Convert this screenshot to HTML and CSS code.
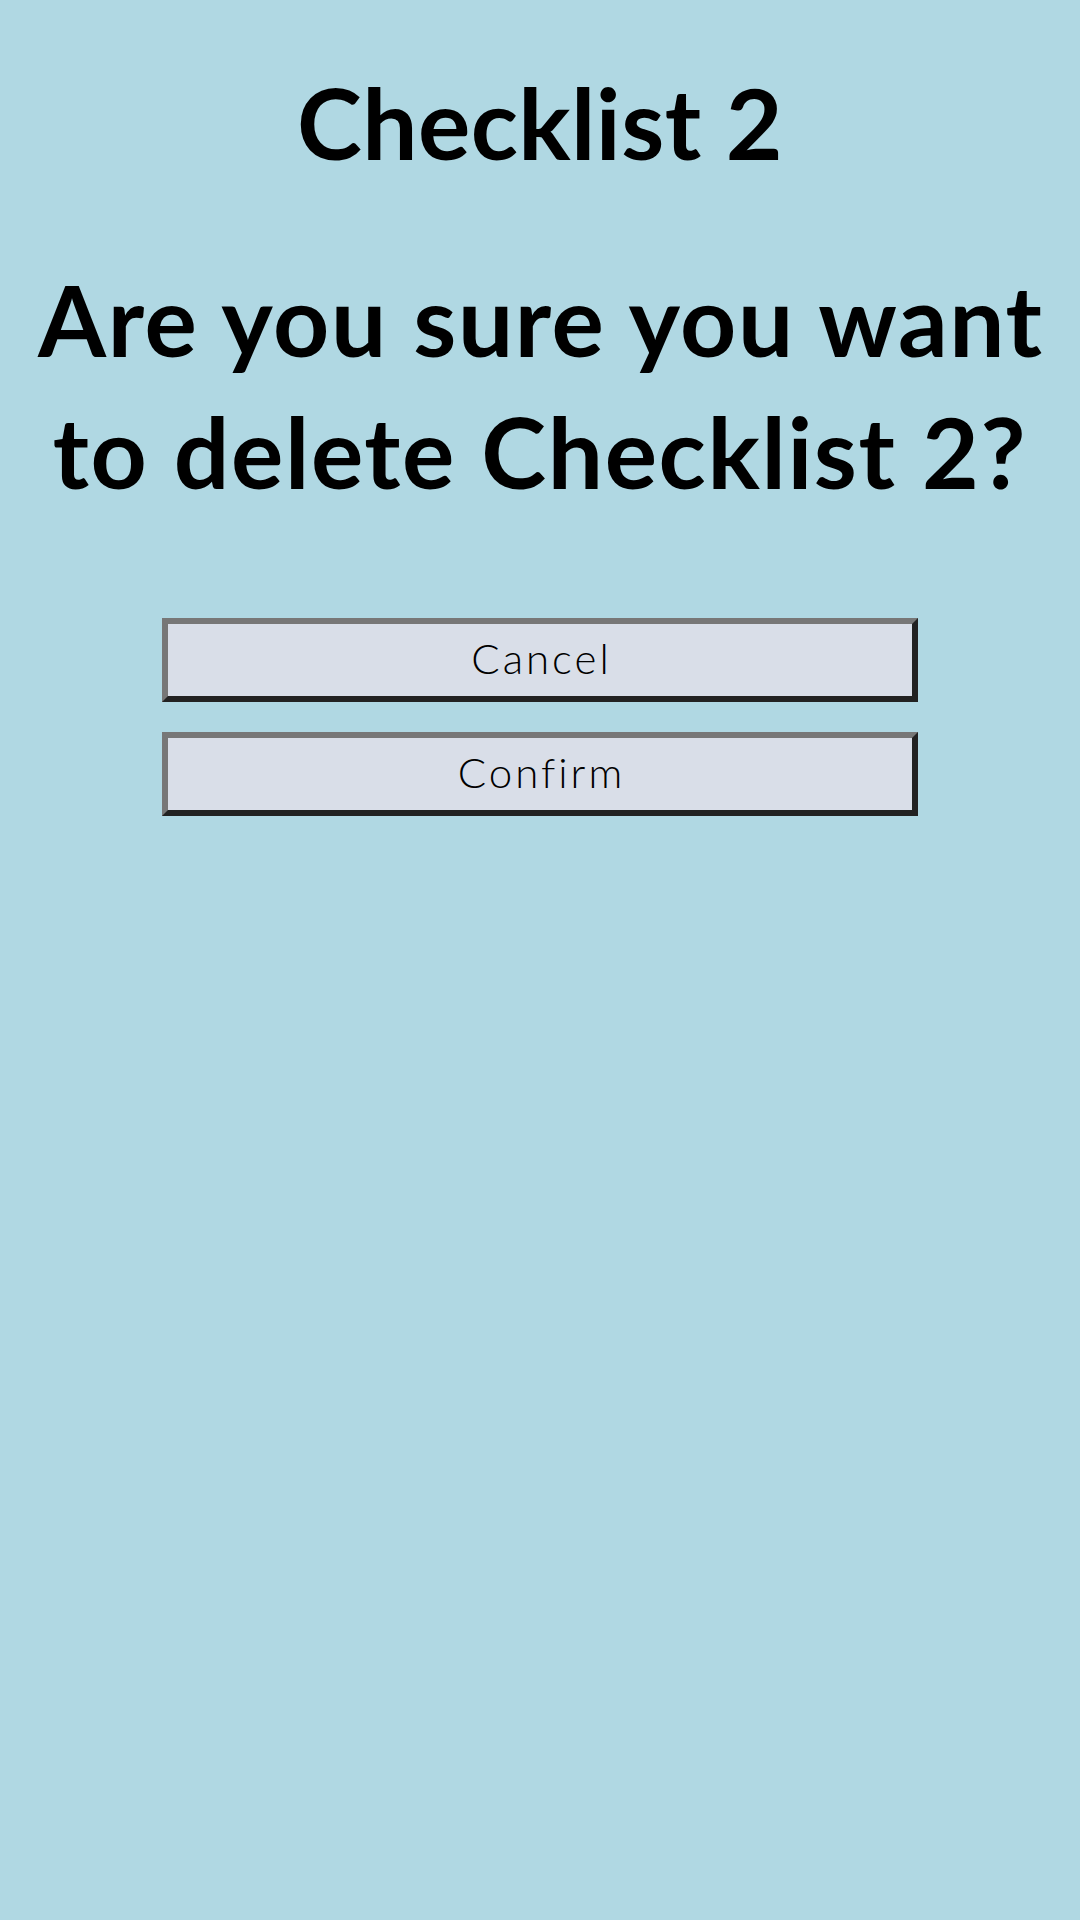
FILE: index.html
```html
<!DOCTYPE html>
<html lang="en">
<head>
<meta charset="utf-8">
<title>Checklist 2</title>
<link rel="stylesheet" href="styles.css">
</head>
<body>
<main class="page">
  <h1 class="title">Checklist 2</h1>
  <h2 class="question">Are you sure you want to delete Checklist 2?</h2>
  <div class="actions">
    <button class="btn" type="button">Cancel</button>
    <button class="btn" type="button">Confirm</button>
  </div>
</main>
</body>
</html>
```

FILE: styles.css
```css
html, body {
  margin: 0;
  padding: 0;
  background: #b0d8e3;
}

body {
  width: 1080px;
  min-height: 1920px;
  font-family: Lato, "Noto Sans", sans-serif;
  color: #000;
}

.page {
  display: flex;
  flex-direction: column;
  align-items: center;
  padding-top: 56px;
}

.title {
  margin: 0;
  font-size: 98px;
  line-height: 132px;
  font-weight: 700;
  letter-spacing: 0.4px;
  text-align: center;
}

.question {
  margin: 65px 0 0;
  width: 1070px;
  font-size: 98px;
  line-height: 132px;
  font-weight: 700;
  letter-spacing: 1.6px;
  text-indent: 1.6px;
  text-align: center;
}

.actions {
  margin-top: 101px;
  width: 756px;
  display: flex;
  flex-direction: column;
  gap: 30px;
}

.btn {
  display: block;
  width: 100%;
  height: 84px;
  margin: 0;
  padding: 0 0 4px;
  background: #d9dee8;
  border-style: solid;
  border-width: 6px;
  border-color: #777777 #222222 #222222 #777777;
  font-family: Lato, "Noto Sans", sans-serif;
  font-size: 42px;
  line-height: 68px;
  font-weight: 300;
  letter-spacing: 3px;
  text-indent: 3px;
  color: #000;
  text-align: center;
}
```
